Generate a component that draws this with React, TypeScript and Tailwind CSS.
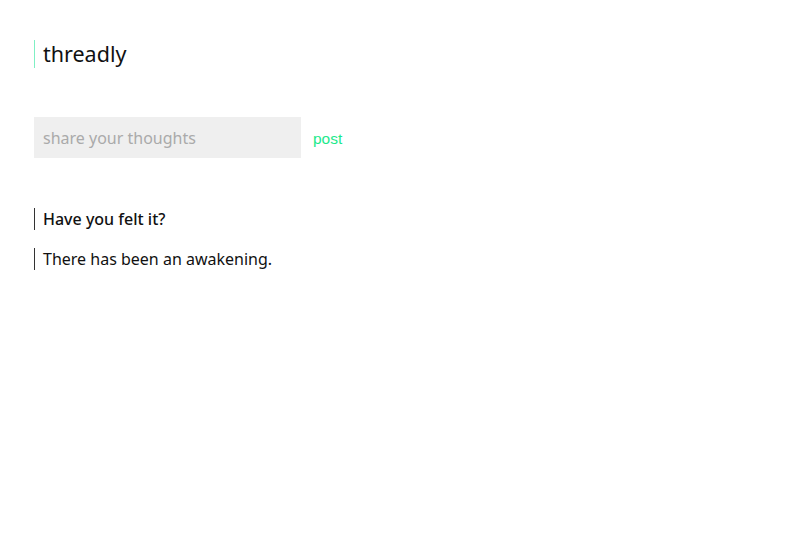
import React from "react";

const posts = ["Have you felt it?", "There has been an awakening."];

export default function App() {
  return (
    <div className="min-h-screen bg-white pl-[34px] pt-[40px] font-['Noto_Sans',sans-serif] text-[#111]">
      <h1 className="flex h-[28px] items-center border-l border-[#7ff0c4] pl-[8px] text-[21.5px] leading-none">
        threadly
      </h1>

      <div className="mt-[49px] flex items-center gap-[12px]">
        <input
          placeholder="share your thoughts"
          className="h-[41px] w-[267px] bg-[#efefef] px-[9px] text-[16px] outline-none placeholder:text-[#aaaaaa]"
        />
        <button className="mt-[2px] font-['Liberation_Sans',sans-serif] text-[15.5px] text-[#1de98b]">post</button>
      </div>

      <div className="mt-[50px] flex flex-col gap-[18px]">
        {posts.map((p, i) => (
          <p
            key={p}
            className={
              "flex h-[22px] items-center border-l border-[#333] pl-[8px] text-[16px] leading-none " +
              (i === 0 ? "font-medium" : "")
            }
          >
            {p}
          </p>
        ))}
      </div>
    </div>
  );
}
